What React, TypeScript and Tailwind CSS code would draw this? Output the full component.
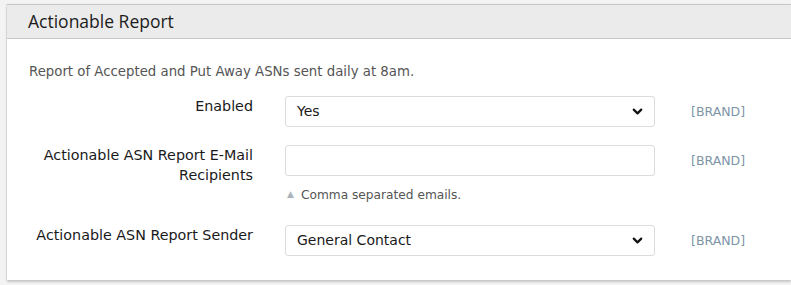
import { ChevronDown } from "lucide-react";

const labelFont = "font-['DejaVu_Sans',sans-serif]";

function Brand() {
  return (
    <span className={`ml-[4px] text-[12.5px] leading-[31px] text-[#7d95a6] ${labelFont}`}>[BRAND]</span>
  );
}

function SelectBox({ value }: { value: string }) {
  return (
    <div className="flex h-[31px] items-center justify-between rounded-[3px] border border-[#dcdcdc] bg-white pl-[11px] pr-[9px]">
      <span className={`text-[14px] text-[#1a1a1a] ${labelFont}`}>{value}</span>
      <ChevronDown size={15} strokeWidth={3.5} className="text-[#111]" />
    </div>
  );
}

export default function App() {
  return (
    <div className="h-[285px] w-[791px] overflow-hidden bg-[#f3f3f3] pt-[4px]">
      <div className="ml-[7px] border-t border-[#c6c6c6] bg-white shadow-[0_2px_2px_rgba(0,0,0,0.18),-1px_0_1px_rgba(0,0,0,0.06)]">
        {/* Header */}
        <div className="flex h-[34px] items-center border-b border-[#c8c8c8] bg-[#ebebeb] pl-[21px]">
          <h2 className="font-['Open_Sans',sans-serif] text-[17.5px] text-[#1c1c1c]">Actionable Report</h2>
        </div>

        <div className={`px-[22px] pb-[24px] pt-[23px] ${labelFont}`}>
          <p className="text-[13.3px] text-[#555]">
            Report of Accepted and Put Away ASNs sent daily at 8am.
          </p>

          <div className="mt-[14px] grid grid-cols-[224px_370px_auto] gap-x-[32px]">
            {/* Enabled */}
            <label className="text-right text-[14.3px] leading-[20px] text-[#1a1a1a]">Enabled</label>
            <SelectBox value="Yes" />
            <Brand />

            {/* Recipients */}
            <label className="mt-[18px] text-right text-[14.3px] leading-[20px] text-[#1a1a1a]">
              Actionable ASN Report E-Mail Recipients
            </label>
            <div className="mt-[18px]">
              <div className="h-[31px] rounded-[3px] border border-[#dcdcdc] bg-white" />
              <div className="mt-[12px] flex h-[14px] items-center gap-[7px] pl-[2px] text-[12.2px] text-[#555]">
                <span className="text-[9px] text-[#aab3ba]">▲</span>
                <span>Comma separated emails.</span>
              </div>
            </div>
            <div className="mt-[18px]">
              <Brand />
            </div>

            {/* Sender */}
            <label className="mt-[23px] text-right text-[14.3px] leading-[20px] text-[#1a1a1a]">
              Actionable ASN Report Sender
            </label>
            <div className="mt-[23px]">
              <SelectBox value="General Contact" />
            </div>
            <div className="mt-[23px]">
              <Brand />
            </div>
          </div>
        </div>
      </div>
    </div>
  );
}
